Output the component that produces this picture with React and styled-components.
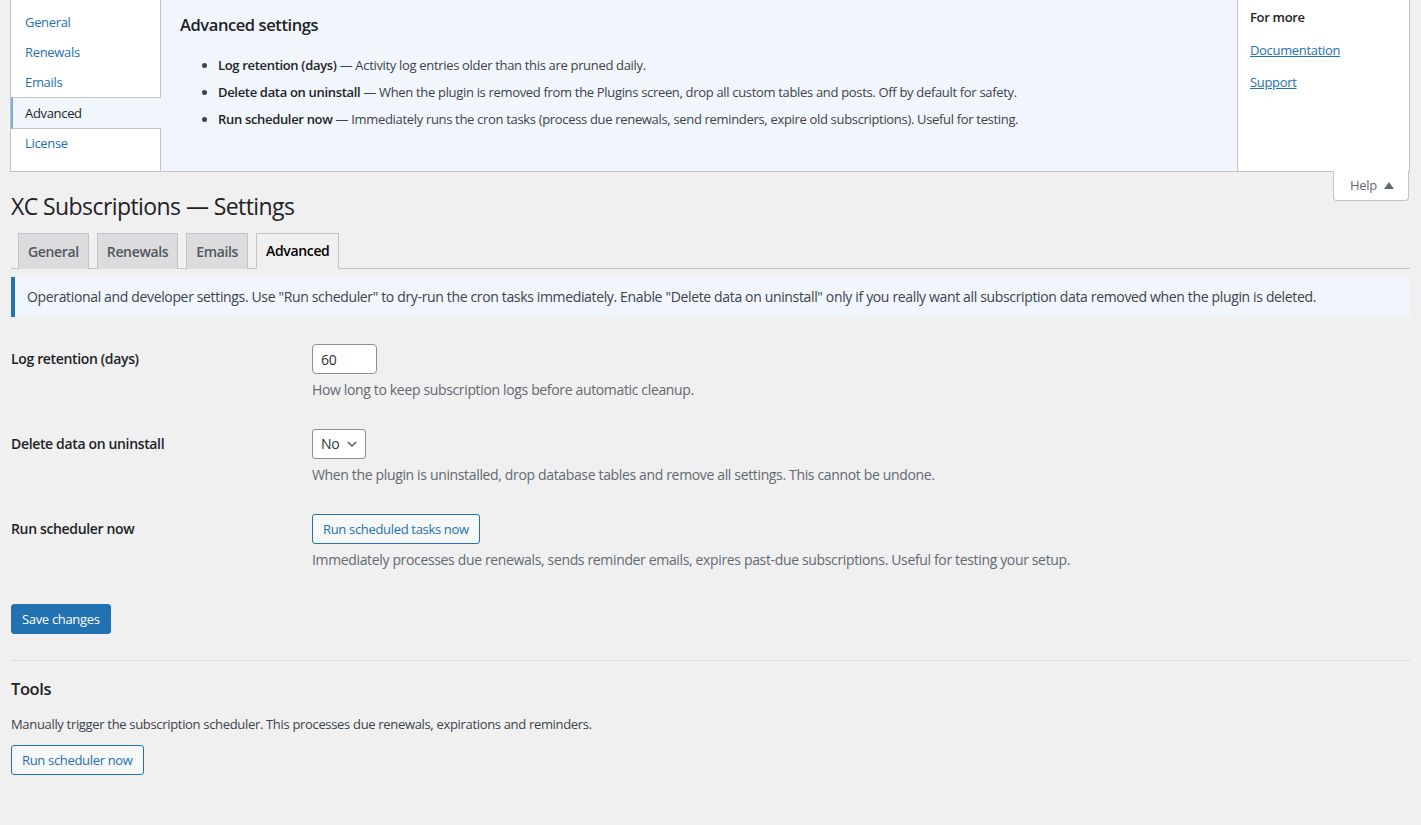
import React from 'react';
import styled, { createGlobalStyle } from 'styled-components';

const GlobalStyle = createGlobalStyle`
  html, body {
    margin: 0;
    padding: 0;
    background: #f0f0f1;
  }
  body {
    font-family: "Open Sans", "Noto Sans", sans-serif;
    font-size: 13px;
    line-height: 1.4;
    color: #3c434a;
  }
  * {
    box-sizing: border-box;
    letter-spacing: -0.025em;
  }
`;

const Page = styled.div`
  min-height: 825px;
  padding: 0 11px 40px 0;
`;

/* contextual help drawer */
const ScreenMeta = styled.div`
  margin-left: 10px;
  display: flex;
  height: 172px;
  border: 1px solid #c3c4c7;
  border-top: none;
  background: #fff;
`;

const HelpTabs = styled.ul`
  width: 150px;
  flex: none;
  margin: 0;
  padding: 7px 0 0;
  list-style: none;
  border-right: 1px solid #c3c4c7;
`;

const HelpTab = styled.li`
  height: ${p => (p.$active ? '32px' : '30px')};
  margin-right: ${p => (p.$active ? '-1px' : '0')};
  padding-left: ${p => (p.$active ? '12px' : '14px')};
  padding-top: ${p => (p.$active ? '1px' : '0')};
  display: flex;
  align-items: center;
  color: ${p => (p.$active ? '#1d2327' : '#2271b1')};
  background: ${p => (p.$active ? '#f0f6fc' : 'transparent')};
  border-left: ${p => (p.$active ? '2px solid #72aee6' : 'none')};
  border-top: ${p => (p.$active ? '1px solid #c3c4c7' : 'none')};
  border-bottom: ${p => (p.$active ? '1px solid #c3c4c7' : 'none')};
  margin-bottom: ${p => (p.$active ? '-1px' : '0')};
`;

const HelpBody = styled.div`
  flex: 1;
  background: #f0f6fc;
  padding: 13px 20px 0 19px;
`;

const HelpTitle = styled.h2`
  margin: 0 0 20px;
  font-size: 16.5px;
  font-weight: 600;
  color: #1d2327;
`;

const HelpList = styled.ul`
  margin: 0;
  padding-left: 38px;
  list-style: disc;
  li {
    margin-bottom: 9px;
    line-height: 18px;
  }
  li::marker { color: #3c434a; }
  strong { font-weight: 600; color: #1d2327; }
`;

const HelpSide = styled.div`
  width: 172px;
  flex: none;
  padding: 7px 12px 0;
  border-left: 1px solid #c3c4c7;
  margin-left: -1px;
`;

const SideTitle = styled.p`
  margin: 0 0 14px;
  font-weight: 600;
  color: #1d2327;
  line-height: 20px;
`;

const SideLink = styled.a`
  display: block;
  margin-bottom: 14px;
  line-height: 18px;
  color: #2271b1;
  text-decoration: underline;
`;

const HelpLinkRow = styled.div`
  display: flex;
  justify-content: flex-end;
  margin-top: -1px;
`;

const HelpToggle = styled.button`
  height: 30px;
  width: 76px;
  margin-right: 1px;
  border: 1px solid #c3c4c7;
  border-top: none;
  border-radius: 0 0 4px 4px;
  background: #fff;
  color: #646970;
  font: inherit;
  font-size: 13px;
  display: flex;
  align-items: center;
  justify-content: center;
  gap: 7px;
  padding: 0 0 0 2px;
`;

const Wrap = styled.div`
  margin-left: 11px;
  margin-top: -29px;
`;

const PageTitle = styled.h1`
  margin: 0;
  padding: 19px 0 12px;
  font-size: 23px;
  font-weight: 400;
  line-height: 30px;
  color: #1d2327;
`;

const TabBar = styled.nav`
  display: flex;
  gap: 8px;
  padding-left: 7px;
  height: 36px;
  border-bottom: 1px solid #c3c4c7;
`;

const Tab = styled.a`
  height: 36px;
  padding: 0 9px;
  display: flex;
  align-items: center;
  font-size: 14px;
  font-weight: 600;
  border: 1px solid #c3c4c7;
  border-bottom: ${p => (p.$active ? '1px solid #f0f0f1' : 'none')};
  background: ${p => (p.$active ? '#f0f0f1' : '#dcdcde')};
  color: ${p => (p.$active ? '#000' : '#50575e')};
  text-decoration: none;
`;

const Notice = styled.div`
  margin: 8px 0 18px;
  padding: 10px 12px;
  background: #f0f6fc;
  border-left: 4px solid #2271b1;
  font-size: 14px;
  line-height: 20px;
`;

const FormTable = styled.div`
  display: flex;
  flex-direction: column;
`;

const Row = styled.div`
  display: grid;
  grid-template-columns: 301px 1fr;
  padding: 9px 0 11px;
  margin-bottom: 9px;
`;

const Label = styled.div`
  padding-top: 6px;
  font-size: 14px;
  font-weight: 600;
  color: #1d2327;
  line-height: 1.3;
`;

const Field = styled.div`
  display: flex;
  flex-direction: column;
  align-items: flex-start;
`;

const NumberInput = styled.input`
  width: 65px;
  height: 30px;
  padding: 0 8px;
  border: 1px solid #8c8f94;
  border-radius: 4px;
  background: #fff;
  font: inherit;
  font-size: 14px;
  color: #2c3338;
  &::-webkit-inner-spin-button { display: none; }
`;

const Select = styled.div`
  width: 54px;
  height: 30px;
  padding: 0 6px 0 8px;
  border: 1px solid #8c8f94;
  border-radius: 3px;
  background: #fff;
  font-size: 14px;
  color: #2c3338;
  display: flex;
  align-items: center;
  justify-content: space-between;
`;

const Description = styled.p`
  margin: 6px 0 0;
  font-size: 14px;
  color: #646970;
  line-height: 20px;
`;

const Button = styled.button`
  height: 30px;
  padding: 0 10px;
  border: 1px solid #2271b1;
  border-radius: 3px;
  font: inherit;
  font-size: 13px;
  line-height: 28px;
  cursor: pointer;
  background: ${p => (p.$primary ? '#2271b1' : '#f6f7f7')};
  color: ${p => (p.$primary ? '#fff' : '#2271b1')};
`;

const Submit = styled.div`
  padding: 14px 0 0;
`;

const Divider = styled.hr`
  margin: 26px 0 0;
  border: none;
  border-top: 1px solid #dcdcde;
`;

const SectionTitle = styled.h2`
  margin: 16px 0 0;
  font-size: 16.5px;
  font-weight: 600;
  color: #1d2327;
  line-height: 1.4;
`;

const Text = styled.p`
  margin: 14px 0 11px;
  line-height: 20px;
`;

function Chevron() {
  return (
    <svg width="14" height="14" viewBox="0 0 20 20" fill="none">
      <path d="M4.5 7.5l5.5 5.5 5.5-5.5" stroke="#50575e" strokeWidth="2" strokeLinecap="round" strokeLinejoin="round" />
    </svg>
  );
}

function ArrowUp() {
  return (
    <svg width="10" height="7" viewBox="0 0 10 7">
      <polygon points="5,0 10,7 0,7" fill="#646970" />
    </svg>
  );
}

export default function App() {
  const helpTabs = ['General', 'Renewals', 'Emails', 'Advanced', 'License'];
  const tabs = ['General', 'Renewals', 'Emails', 'Advanced'];

  return (
    <Page>
      <GlobalStyle />
      <ScreenMeta>
        <HelpTabs>
          {helpTabs.map(t => (
            <HelpTab key={t} $active={t === 'Advanced'}>{t}</HelpTab>
          ))}
        </HelpTabs>
        <HelpBody>
          <HelpTitle>Advanced settings</HelpTitle>
          <HelpList>
            <li><strong>Log retention (days)</strong> — Activity log entries older than this are pruned daily.</li>
            <li><strong>Delete data on uninstall</strong> — When the plugin is removed from the Plugins screen, drop all custom tables and posts. Off by default for safety.</li>
            <li><strong>Run scheduler now</strong> — Immediately runs the cron tasks (process due renewals, send reminders, expire old subscriptions). Useful for testing.</li>
          </HelpList>
        </HelpBody>
        <HelpSide>
          <SideTitle>For more</SideTitle>
          <SideLink href="#">Documentation</SideLink>
          <SideLink href="#">Support</SideLink>
        </HelpSide>
      </ScreenMeta>
      <HelpLinkRow>
        <HelpToggle>Help <ArrowUp /></HelpToggle>
      </HelpLinkRow>

      <Wrap>
        <PageTitle>XC Subscriptions — Settings</PageTitle>
        <TabBar>
          {tabs.map(t => (
            <Tab key={t} href="#" $active={t === 'Advanced'}>{t}</Tab>
          ))}
        </TabBar>
        <Notice>
          Operational and developer settings. Use "Run scheduler" to dry-run the cron tasks immediately. Enable "Delete data on uninstall" only if you really want all subscription data removed when the plugin is deleted.
        </Notice>

        <FormTable>
          <Row>
            <Label>Log retention (days)</Label>
            <Field>
              <NumberInput type="number" defaultValue="60" />
              <Description>How long to keep subscription logs before automatic cleanup.</Description>
            </Field>
          </Row>
          <Row>
            <Label>Delete data on uninstall</Label>
            <Field>
              <Select>No <Chevron /></Select>
              <Description>When the plugin is uninstalled, drop database tables and remove all settings. This cannot be undone.</Description>
            </Field>
          </Row>
          <Row>
            <Label>Run scheduler now</Label>
            <Field>
              <Button>Run scheduled tasks now</Button>
              <Description>Immediately processes due renewals, sends reminder emails, expires past-due subscriptions. Useful for testing your setup.</Description>
            </Field>
          </Row>
        </FormTable>

        <Submit>
          <Button $primary>Save changes</Button>
        </Submit>
        <Divider />
        <SectionTitle>Tools</SectionTitle>
        <Text>Manually trigger the subscription scheduler. This processes due renewals, expirations and reminders.</Text>
        <Button>Run scheduler now</Button>
      </Wrap>
    </Page>
  );
}
